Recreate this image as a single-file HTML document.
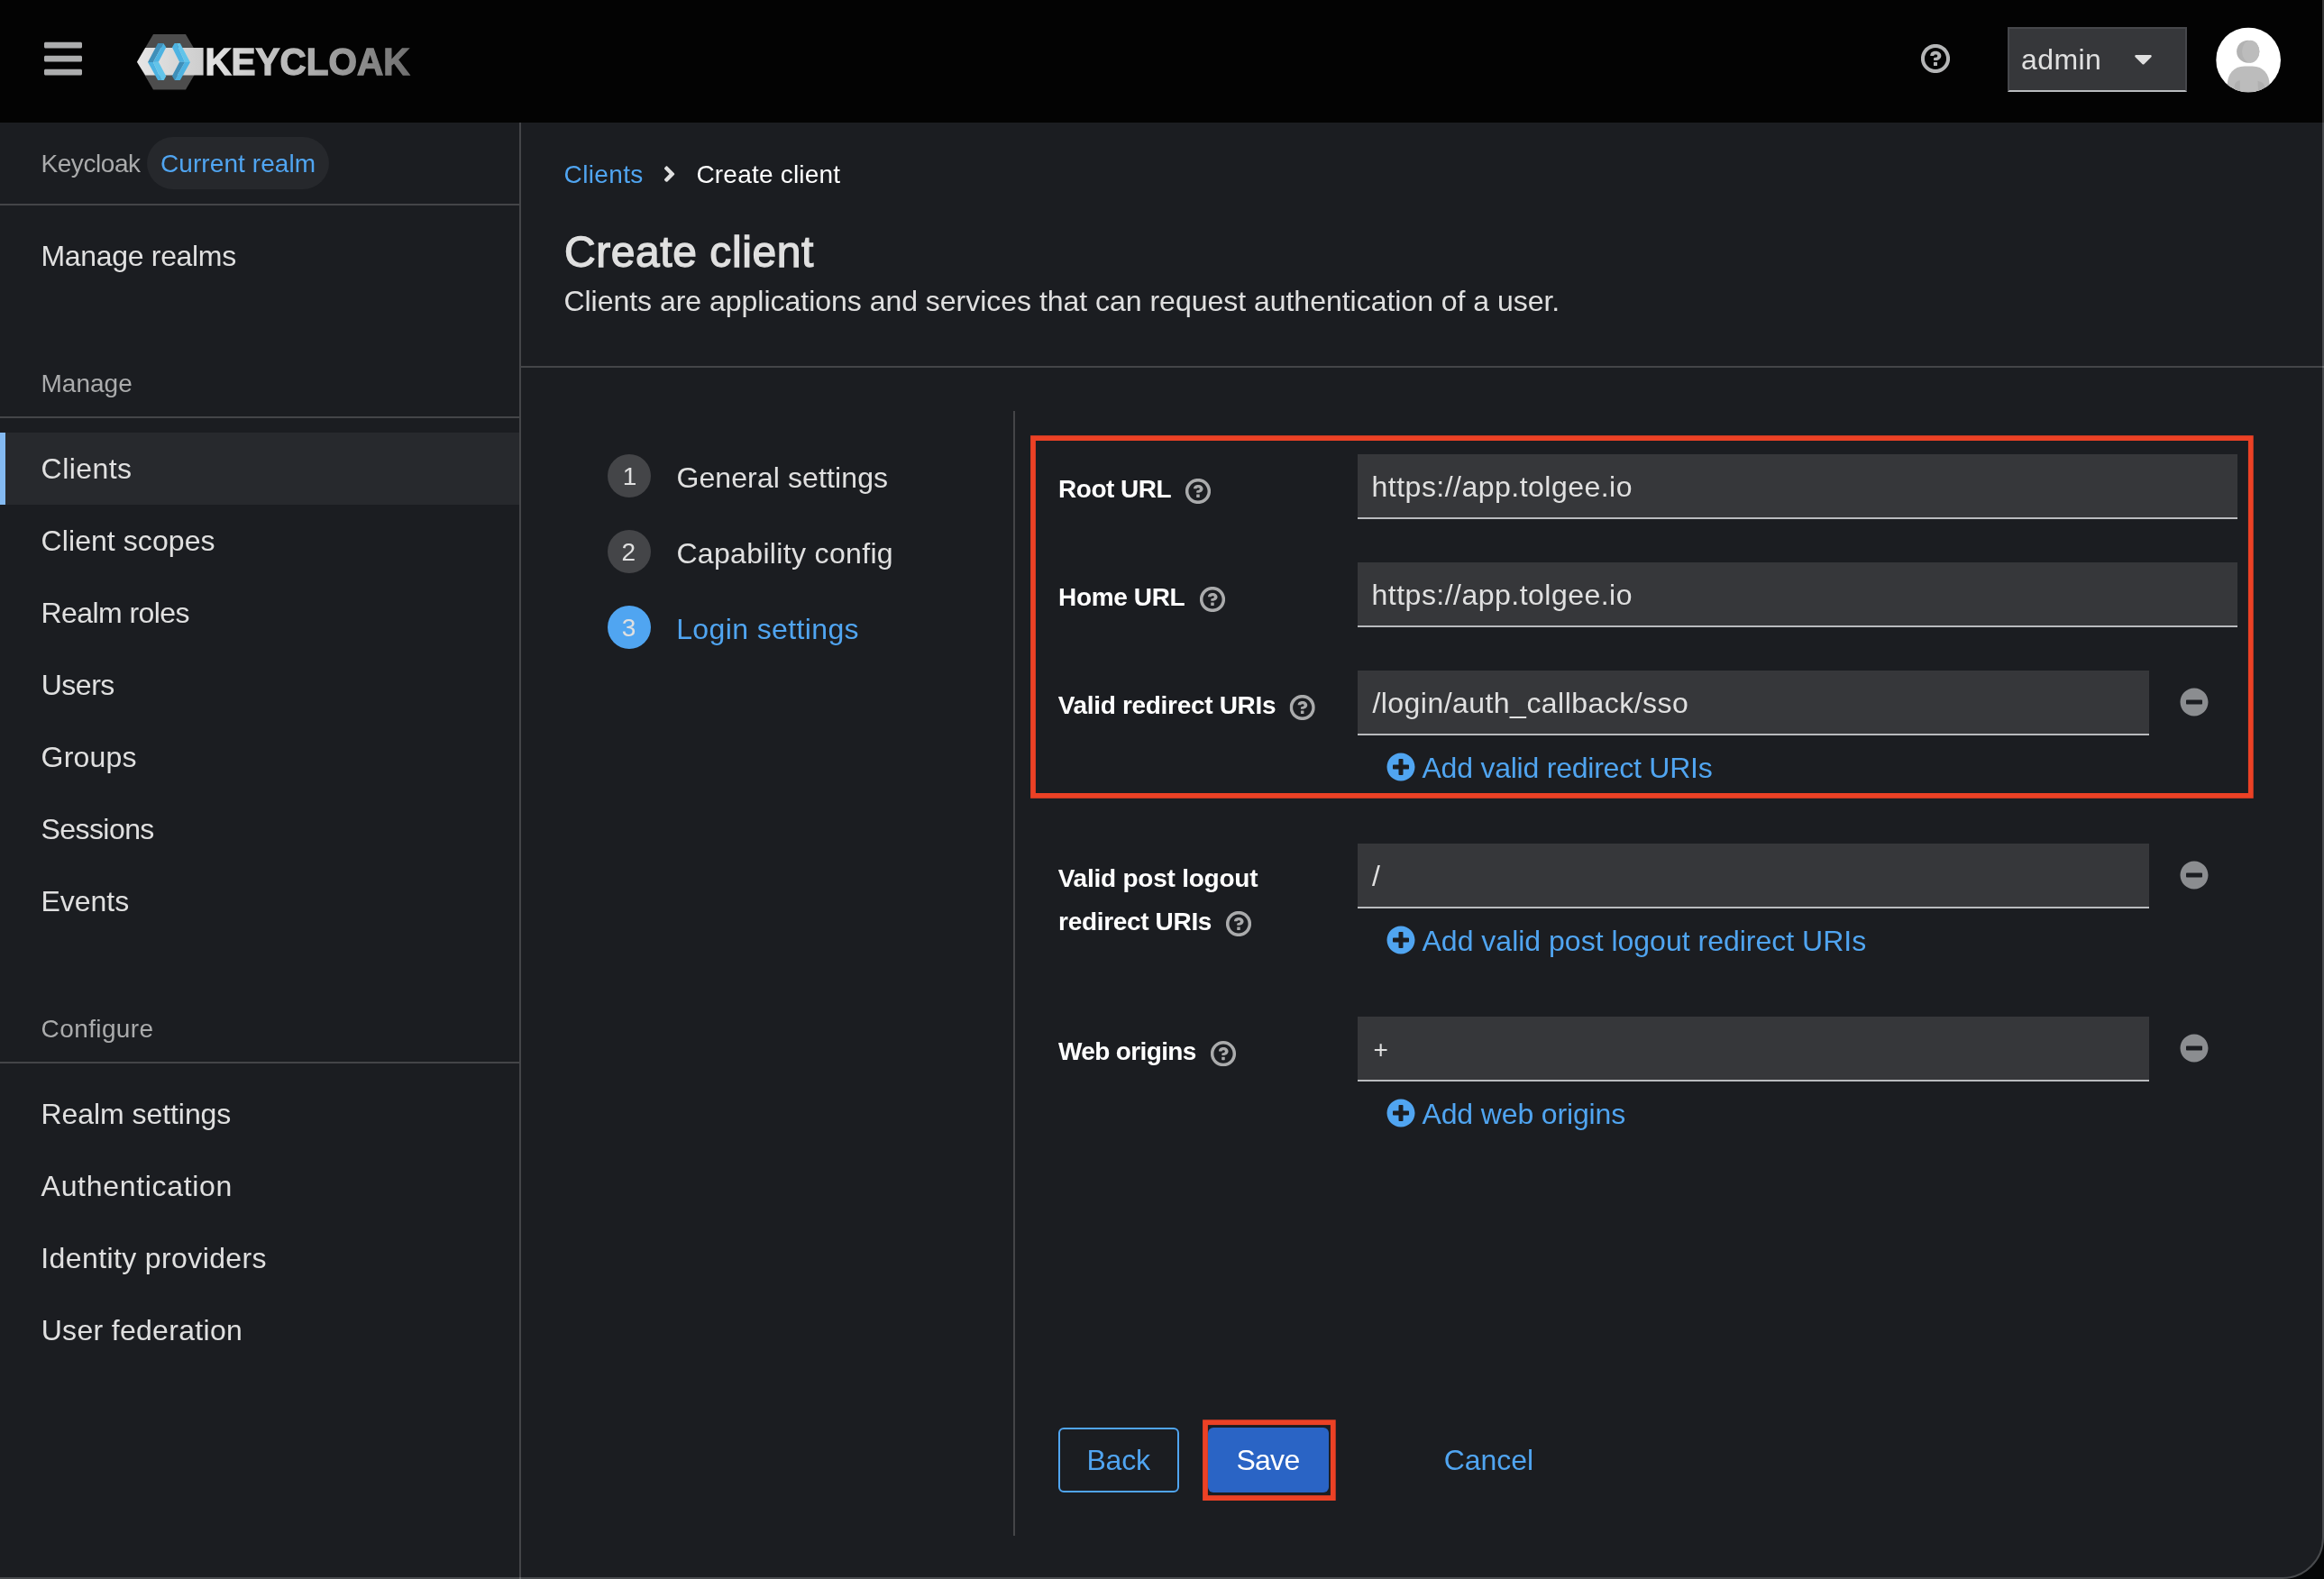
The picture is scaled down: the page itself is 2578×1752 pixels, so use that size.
<!DOCTYPE html>
<html lang="en">
<head>
<meta charset="utf-8">
<title>Create client - Keycloak Administration Console</title>
<style>
*{box-sizing:border-box;margin:0;padding:0}
html,body{width:2578px;height:1752px;overflow:hidden;background:#050607}
body{font-family:"Liberation Sans",sans-serif;position:relative;-webkit-font-smoothing:antialiased}
#win{position:absolute;left:0;top:0;width:2578px;height:1752px;background:#1b1d21;overflow:hidden;border-bottom-right-radius:46px}
#frame{position:absolute;left:-2px;top:-2px;width:2580px;height:1754px;border:2px solid rgba(255,255,255,.2);border-bottom-right-radius:46px;pointer-events:none;z-index:50}
.abs{position:absolute}
.t{position:absolute;display:block;white-space:nowrap;line-height:1;font-weight:400;font-style:normal;text-decoration:none;margin:0;padding:0}
header{position:absolute;left:0;top:0;width:2578px;height:136px;background:#030303}
#sidebar{position:absolute;left:0;top:136px;width:578px;height:1616px;border-right:2px solid #444548}
.hr{position:absolute;height:2px;background:#444548}
.vr{position:absolute;width:2px;background:#444548}
.pill{position:absolute;left:163px;top:152px;width:202px;height:58px;border-radius:29px;background:#26282c}
.cur{position:absolute;left:0;top:480px;width:576px;height:80px;background:#27292d}
.cur:before{content:"";position:absolute;left:0;top:0;width:6px;height:80px;background:#84baf2}
.step{position:absolute;left:674px;width:48px;height:48px;border-radius:50%;background:#444548}
.step.on{background:#50a5f1}
.in{position:absolute;left:1506px;height:72px;background:#36373a;border-bottom:2px solid #b9bbbe}
.btn{position:absolute;top:1584px;height:72px;border-radius:6px}
.ico{position:absolute;overflow:visible}
#txt nav,#txt main,#txt form,#txt div{display:block;position:static;margin:0;padding:0;border:0}
#txt .t{position:absolute}
</style>
</head>
<body>
<div id="win">
<header>
  <div class="abs" style="left:2227px;top:30px;width:199px;height:72px;background:#36373a;border:2px solid #46474b;border-bottom-color:#b9bbbe"></div>
</header>
<div id="sidebar"></div>
<div class="pill"></div>
<div class="hr" style="left:0;top:226px;width:576px"></div>
<div class="hr" style="left:0;top:462px;width:576px"></div>
<div class="cur"></div>
<div class="hr" style="left:0;top:1178px;width:576px"></div>
<div class="hr" style="left:578px;top:406px;width:2000px"></div>
<div class="vr" style="left:1124px;top:456px;height:1248px"></div>
<div class="step" style="top:504px"></div>
<div class="step" style="top:588px"></div>
<div class="step on" style="top:672px"></div>
<div class="in" style="top:504px;width:976px"></div>
<div class="in" style="top:624px;width:976px"></div>
<div class="in" style="top:744px;width:878px"></div>
<div class="in" style="top:936px;width:878px"></div>
<div class="in" style="top:1128px;width:878px"></div>
<div class="btn" style="left:1174px;width:134px;border:2px solid #50a5f1"></div>
<div class="btn" style="left:1340px;width:134px;background:#2a64c5"></div>
<svg class="ico" style="left:0;top:0;will-change:transform" width="2578" height="1752" viewBox="0 0 2578 1752">
<g fill="none" stroke="#ec4125" stroke-width="5.800">
<rect x="1146" y="486.100" width="1350.800" height="396.800"/>
<rect x="1337" y="1578.200" width="141.800" height="83.900"/>
</g>
<svg x="140" y="20" width="330" height="100" viewBox="140 20 330 100">
<defs>
<linearGradient id="lgT" x1="228" y1="0" x2="456" y2="0" gradientUnits="userSpaceOnUse"><stop offset="0" stop-color="#e4e4e4"/><stop offset=".45" stop-color="#b4b4b4"/><stop offset="1" stop-color="#6e6e6e"/></linearGradient>
<linearGradient id="lgB" x1="152" y1="0" x2="226" y2="0" gradientUnits="userSpaceOnUse"><stop offset="0" stop-color="#e6e6e6"/><stop offset="1" stop-color="#cdcdcd"/></linearGradient>
</defs>
<polygon points="170,38 206,38 224,68.700 206,99.500 170,99.500 152,68.700" fill="#4d4d4d"/>
<polygon points="152,68.700 161.200,53 225.600,53 225.600,83.500 161.200,83.500" fill="url(#lgB)"/>
<polygon points="175.14,48.03 181.31,48.03 169.95,69.03 164.02,69.03" fill="#3f8fb9"/>
<polygon points="181.31,48.03 184.28,52.48 175.88,68.78 169.95,69.03" fill="#4db3e2"/>
<polygon points="164.02,69.03 169.95,69.03 179.09,89.04 175.14,89.04" fill="#4db3e2"/>
<polygon points="169.95,69.03 175.88,68.78 184.28,84.59 181.81,89.04 179.09,89.04" fill="#62c4ea"/>
<polygon points="193.67,48.03 195.89,48.03 205.03,69.03 199.10,68.78 190.95,52.48" fill="#4db3e2"/>
<polygon points="195.89,48.03 199.84,48.03 210.96,69.03 205.03,69.03" fill="#62c4ea"/>
<polygon points="199.10,68.78 205.03,69.03 193.67,89.04 190.95,84.35" fill="#3f8fb9"/>
<polygon points="205.03,69.03 210.96,69.03 199.84,89.04 193.67,89.04" fill="#4db3e2"/>
<text x="227.400" y="83.200" font-family="'Liberation Sans',sans-serif" font-weight="700" font-size="43" textLength="227" lengthAdjust="spacingAndGlyphs" fill="url(#lgT)" stroke="url(#lgT)" stroke-width="1.400" stroke-linejoin="miter">KEYCLOAK</text>
</svg>
<svg x="49.00" y="41.05" width="42.00" height="48.00" viewBox="0 0 448 512"><path fill="#acadae" d="M16 132h416c8.837 0 16-7.163 16-16V76c0-8.837-7.163-16-16-16H16C7.163 60 0 67.163 0 76v40c0 8.837 7.163 16 16 16zm0 160h416c8.837 0 16-7.163 16-16v-40c0-8.837-7.163-16-16-16H16c-8.837 0-16 7.163-16 16v40c0 8.837 7.163 16 16 16zm0 160h416c8.837 0 16-7.163 16-16v-40c0-8.837-7.163-16-16-16H16c-8.837 0-16 7.163-16 16v40c0 8.837 7.163 16 16 16z"/></svg>
<svg x="2130.90" y="48.90" width="32.20" height="32.20" viewBox="0 0 1024 1024"><path fill="#b4b5b6" d="M521.3,576 C627.5,576 713.7,502 713.7,413.7 C713.7,325.4 627.6,253.6 521.3,253.6 C366,253.6 334.5,337.7 329.2,407.2 C329.2,414.3 335.2,416 343.5,416 L445,416 C450.5,416 458,415.5 460.8,406.5 C460.8,362.6 582.9,357.1 582.9,413.6 C582.9,441.9 556.2,470.9 521.3,473 C486.4,475.1 447.3,479.8 447.3,521.7 L447.3,553.8 C447.3,570.8 456.1,576 472,576 C487.9,576 521.3,576 521.3,576 M575.3,751.3 L575.3,655.3 C575.3,651.1 573.6,647 570.6,644 C567.6,640.9 563.6,639.2 559.3,639.3 L463.3,639.3 C459.1,639.3 455,641 452,644 C448.9,647 447.2,651 447.3,655.3 L447.3,751.3 C447.3,755.5 449,759.6 452,762.6 C455,765.7 459,767.4 463.3,767.3 L559.3,767.3 C563.5,767.3 567.6,765.6 570.6,762.6 C573.7,759.6 575.4,755.6 575.3,751.3 M512,896 C300.2,896 128,723.9 128,512 C128,300.3 300.2,128 512,128 C723.8,128 896,300.2 896,512 C896,723.8 723.7,896 512,896 M512.1,0 C229.7,0 0,229.8 0,512 C0,794.2 229.8,1024 512.1,1024 C794.4,1024 1024,794.3 1024,512 C1024,229.7 794.4,0 512.1,0"/></svg>
<svg x="2367.50" y="49.00" width="20.00" height="32.00" viewBox="0 0 320 512"><path fill="#e0e0e0" d="M31.3 192h257.3c17.8 0 26.7 21.5 14.1 34.1L174.1 354.8c-7.8 7.8-20.5 7.8-28.3 0L17.2 226.1C4.6 213.5 13.5 192 31.3 192z"/></svg>
<svg x="2458.200" y="30.600" width="71.800" height="71.800" viewBox="0 0 72 72">
<defs><clipPath id="avc"><circle cx="36" cy="36" r="36"/></clipPath></defs>
<circle cx="36" cy="36" r="36" fill="#ffffff"/>
<g clip-path="url(#avc)">
<circle cx="35.6" cy="26.7" r="12.6" fill="#b2b2b2"/>
<path d="M41.5 15.6a12.6 12.6 0 0 1 0 22.2 a6.7 6.7 0 0 1 -3.4 .9 a12.6 12.6 0 0 1 0 -24 a6.7 6.7 0 0 1 3.4 .9z" fill="#bcbcbc"/>
<ellipse cx="38.6" cy="26.7" rx="9.6" ry="12.6" fill="#bcbcbc"/>
<path d="M12.6 80V64c0-12 7-21 19-21h9c12 0 19 9 19 21v16z" fill="#bcbcbc"/>
<path d="M20.5 72V66c0-4 2.500-6.500 6.200-7.200V72z" fill="#b0b0b0"/>
<path d="M54 72V66c0-3.500-3-5.800-7.600-6.700L47 72z" fill="#b0b0b0"/>
</g></svg>
<svg x="735.60" y="179.10" width="14.00" height="28.00" viewBox="0 0 256 512"><path fill="#e0e0e0" d="M224.3 273l-136 136c-9.4 9.4-24.6 9.4-33.9 0l-22.6-22.6c-9.4-9.4-9.4-24.6 0-33.9l96.4-96.4-96.4-96.4c-9.4-9.4-9.4-24.6 0-33.9L54.3 103c9.4-9.4 24.6-9.4 33.9 0l136 136c9.5 9.4 9.5 24.6.1 34z"/></svg>
<svg x="1314.90" y="530.90" width="28.20" height="28.20" viewBox="0 0 1024 1024"><path fill="#aaabac" d="M521.3,576 C627.5,576 713.7,502 713.7,413.7 C713.7,325.4 627.6,253.6 521.3,253.6 C366,253.6 334.5,337.7 329.2,407.2 C329.2,414.3 335.2,416 343.5,416 L445,416 C450.5,416 458,415.5 460.8,406.5 C460.8,362.6 582.9,357.1 582.9,413.6 C582.9,441.9 556.2,470.9 521.3,473 C486.4,475.1 447.3,479.8 447.3,521.7 L447.3,553.8 C447.3,570.8 456.1,576 472,576 C487.9,576 521.3,576 521.3,576 M575.3,751.3 L575.3,655.3 C575.3,651.1 573.6,647 570.6,644 C567.6,640.9 563.6,639.2 559.3,639.3 L463.3,639.3 C459.1,639.3 455,641 452,644 C448.9,647 447.2,651 447.3,655.3 L447.3,751.3 C447.3,755.5 449,759.6 452,762.6 C455,765.7 459,767.4 463.3,767.3 L559.3,767.3 C563.5,767.3 567.6,765.6 570.6,762.6 C573.7,759.6 575.4,755.6 575.3,751.3 M512,896 C300.2,896 128,723.9 128,512 C128,300.3 300.2,128 512,128 C723.8,128 896,300.2 896,512 C896,723.8 723.7,896 512,896 M512.1,0 C229.7,0 0,229.8 0,512 C0,794.2 229.8,1024 512.1,1024 C794.4,1024 1024,794.3 1024,512 C1024,229.7 794.4,0 512.1,0"/></svg>
<svg x="1330.90" y="650.90" width="28.20" height="28.20" viewBox="0 0 1024 1024"><path fill="#aaabac" d="M521.3,576 C627.5,576 713.7,502 713.7,413.7 C713.7,325.4 627.6,253.6 521.3,253.6 C366,253.6 334.5,337.7 329.2,407.2 C329.2,414.3 335.2,416 343.5,416 L445,416 C450.5,416 458,415.5 460.8,406.5 C460.8,362.6 582.9,357.1 582.9,413.6 C582.9,441.9 556.2,470.9 521.3,473 C486.4,475.1 447.3,479.8 447.3,521.7 L447.3,553.8 C447.3,570.8 456.1,576 472,576 C487.9,576 521.3,576 521.3,576 M575.3,751.3 L575.3,655.3 C575.3,651.1 573.6,647 570.6,644 C567.6,640.9 563.6,639.2 559.3,639.3 L463.3,639.3 C459.1,639.3 455,641 452,644 C448.9,647 447.2,651 447.3,655.3 L447.3,751.3 C447.3,755.5 449,759.6 452,762.6 C455,765.7 459,767.4 463.3,767.3 L559.3,767.3 C563.5,767.3 567.6,765.6 570.6,762.6 C573.7,759.6 575.4,755.6 575.3,751.3 M512,896 C300.2,896 128,723.9 128,512 C128,300.3 300.2,128 512,128 C723.8,128 896,300.2 896,512 C896,723.8 723.7,896 512,896 M512.1,0 C229.7,0 0,229.8 0,512 C0,794.2 229.8,1024 512.1,1024 C794.4,1024 1024,794.3 1024,512 C1024,229.7 794.4,0 512.1,0"/></svg>
<svg x="1430.60" y="770.90" width="28.20" height="28.20" viewBox="0 0 1024 1024"><path fill="#aaabac" d="M521.3,576 C627.5,576 713.7,502 713.7,413.7 C713.7,325.4 627.6,253.6 521.3,253.6 C366,253.6 334.5,337.7 329.2,407.2 C329.2,414.3 335.2,416 343.5,416 L445,416 C450.5,416 458,415.5 460.8,406.5 C460.8,362.6 582.9,357.1 582.9,413.6 C582.9,441.9 556.2,470.9 521.3,473 C486.4,475.1 447.3,479.8 447.3,521.7 L447.3,553.8 C447.3,570.8 456.1,576 472,576 C487.9,576 521.3,576 521.3,576 M575.3,751.3 L575.3,655.3 C575.3,651.1 573.6,647 570.6,644 C567.6,640.9 563.6,639.2 559.3,639.3 L463.3,639.3 C459.1,639.3 455,641 452,644 C448.9,647 447.2,651 447.3,655.3 L447.3,751.3 C447.3,755.5 449,759.6 452,762.6 C455,765.7 459,767.4 463.3,767.3 L559.3,767.3 C563.5,767.3 567.6,765.6 570.6,762.6 C573.7,759.6 575.4,755.6 575.3,751.3 M512,896 C300.2,896 128,723.9 128,512 C128,300.3 300.2,128 512,128 C723.8,128 896,300.2 896,512 C896,723.8 723.7,896 512,896 M512.1,0 C229.7,0 0,229.8 0,512 C0,794.2 229.8,1024 512.1,1024 C794.4,1024 1024,794.3 1024,512 C1024,229.7 794.4,0 512.1,0"/></svg>
<svg x="1359.90" y="1010.90" width="28.20" height="28.20" viewBox="0 0 1024 1024"><path fill="#aaabac" d="M521.3,576 C627.5,576 713.7,502 713.7,413.7 C713.7,325.4 627.6,253.6 521.3,253.6 C366,253.6 334.5,337.7 329.2,407.2 C329.2,414.3 335.2,416 343.5,416 L445,416 C450.5,416 458,415.5 460.8,406.5 C460.8,362.6 582.9,357.1 582.9,413.6 C582.9,441.9 556.2,470.9 521.3,473 C486.4,475.1 447.3,479.8 447.3,521.7 L447.3,553.8 C447.3,570.8 456.1,576 472,576 C487.9,576 521.3,576 521.3,576 M575.3,751.3 L575.3,655.3 C575.3,651.1 573.6,647 570.6,644 C567.6,640.9 563.6,639.2 559.3,639.3 L463.3,639.3 C459.1,639.3 455,641 452,644 C448.9,647 447.2,651 447.3,655.3 L447.3,751.3 C447.3,755.5 449,759.6 452,762.6 C455,765.7 459,767.4 463.3,767.3 L559.3,767.3 C563.5,767.3 567.6,765.6 570.6,762.6 C573.7,759.6 575.4,755.6 575.3,751.3 M512,896 C300.2,896 128,723.9 128,512 C128,300.3 300.2,128 512,128 C723.8,128 896,300.2 896,512 C896,723.8 723.7,896 512,896 M512.1,0 C229.7,0 0,229.8 0,512 C0,794.2 229.8,1024 512.1,1024 C794.4,1024 1024,794.3 1024,512 C1024,229.7 794.4,0 512.1,0"/></svg>
<svg x="1342.90" y="1155.10" width="28.20" height="28.20" viewBox="0 0 1024 1024"><path fill="#aaabac" d="M521.3,576 C627.5,576 713.7,502 713.7,413.7 C713.7,325.4 627.6,253.6 521.3,253.6 C366,253.6 334.5,337.7 329.2,407.2 C329.2,414.3 335.2,416 343.5,416 L445,416 C450.5,416 458,415.5 460.8,406.5 C460.8,362.6 582.9,357.1 582.9,413.6 C582.9,441.9 556.2,470.9 521.3,473 C486.4,475.1 447.3,479.8 447.3,521.7 L447.3,553.8 C447.3,570.8 456.1,576 472,576 C487.9,576 521.3,576 521.3,576 M575.3,751.3 L575.3,655.3 C575.3,651.1 573.6,647 570.6,644 C567.6,640.9 563.6,639.2 559.3,639.3 L463.3,639.3 C459.1,639.3 455,641 452,644 C448.9,647 447.2,651 447.3,655.3 L447.3,751.3 C447.3,755.5 449,759.6 452,762.6 C455,765.7 459,767.4 463.3,767.3 L559.3,767.3 C563.5,767.3 567.6,765.6 570.6,762.6 C573.7,759.6 575.4,755.6 575.3,751.3 M512,896 C300.2,896 128,723.9 128,512 C128,300.3 300.2,128 512,128 C723.8,128 896,300.2 896,512 C896,723.8 723.7,896 512,896 M512.1,0 C229.7,0 0,229.8 0,512 C0,794.2 229.8,1024 512.1,1024 C794.4,1024 1024,794.3 1024,512 C1024,229.7 794.4,0 512.1,0"/></svg>
<svg x="2418.00" y="763.00" width="32.00" height="32.00" viewBox="0 0 512 512"><path fill="#8b8d90" d="M256 8C119 8 8 119 8 256s111 248 248 248 248-111 248-248S393 8 256 8zM124 296c-6.6 0-12-5.4-12-12v-56c0-6.6 5.4-12 12-12h264c6.6 0 12 5.4 12 12v56c0 6.6-5.4 12-12 12H124z"/></svg>
<svg x="2418.00" y="955.00" width="32.00" height="32.00" viewBox="0 0 512 512"><path fill="#8b8d90" d="M256 8C119 8 8 119 8 256s111 248 248 248 248-111 248-248S393 8 256 8zM124 296c-6.6 0-12-5.4-12-12v-56c0-6.6 5.4-12 12-12h264c6.6 0 12 5.4 12 12v56c0 6.6-5.4 12-12 12H124z"/></svg>
<svg x="2418.00" y="1147.00" width="32.00" height="32.00" viewBox="0 0 512 512"><path fill="#8b8d90" d="M256 8C119 8 8 119 8 256s111 248 248 248 248-111 248-248S393 8 256 8zM124 296c-6.6 0-12-5.4-12-12v-56c0-6.6 5.4-12 12-12h264c6.6 0 12 5.4 12 12v56c0 6.6-5.4 12-12 12H124z"/></svg>
<svg x="1538.00" y="835.00" width="32.00" height="32.00" viewBox="0 0 512 512"><path fill="#50a5f1" d="M256 8C119 8 8 119 8 256s111 248 248 248 248-111 248-248S393 8 256 8zm144 276c0 6.6-5.4 12-12 12h-92v92c0 6.6-5.4 12-12 12h-56c-6.6 0-12-5.4-12-12v-92h-92c-6.6 0-12-5.4-12-12v-56c0-6.6 5.4-12 12-12h92v-92c0-6.6 5.4-12 12-12h56c6.6 0 12 5.4 12 12v92h92c6.6 0 12 5.4 12 12v56z"/></svg>
<svg x="1538.00" y="1027.00" width="32.00" height="32.00" viewBox="0 0 512 512"><path fill="#50a5f1" d="M256 8C119 8 8 119 8 256s111 248 248 248 248-111 248-248S393 8 256 8zm144 276c0 6.6-5.4 12-12 12h-92v92c0 6.6-5.4 12-12 12h-56c-6.6 0-12-5.4-12-12v-92h-92c-6.6 0-12-5.4-12-12v-56c0-6.6 5.4-12 12-12h92v-92c0-6.6 5.4-12 12-12h56c6.6 0 12 5.4 12 12v92h92c6.6 0 12 5.4 12 12v56z"/></svg>
<svg x="1538.00" y="1219.00" width="32.00" height="32.00" viewBox="0 0 512 512"><path fill="#50a5f1" d="M256 8C119 8 8 119 8 256s111 248 248 248 248-111 248-248S393 8 256 8zm144 276c0 6.6-5.4 12-12 12h-92v92c0 6.6-5.4 12-12 12h-56c-6.6 0-12-5.4-12-12v-92h-92c-6.6 0-12-5.4-12-12v-56c0-6.6 5.4-12 12-12h92v-92c0-6.6 5.4-12 12-12h56c6.6 0 12 5.4 12 12v92h92c6.6 0 12 5.4 12 12v56z"/></svg>
</svg>
<div id="txt" style="position:absolute;left:0;top:0;width:2578px;height:1752px;will-change:transform">
<div>
<span class="t" style="left:2242.0px;top:50px;font-size:32px;color:#e0e0e0;letter-spacing:0.44px;">admin</span>
</div>
<nav>
<a class="t" href="#" style="left:45.5px;top:168px;font-size:28px;color:#aaabac;letter-spacing:-0.44px;">Keycloak</a>
<a class="t" href="#" style="left:178.0px;top:168px;font-size:28px;color:#50a5f1;letter-spacing:0.08px;">Current realm</a>
<a class="t" href="#" style="left:45.5px;top:268px;font-size:32px;color:#e0e0e0;letter-spacing:-0.32px;">Manage realms</a>
<a class="t" href="#" style="left:45.5px;top:412px;font-size:28px;color:#aaabac;letter-spacing:0.02px;">Manage</a>
<a class="t" href="#" style="left:45.6px;top:504px;font-size:32px;color:#e0e0e0;letter-spacing:0.44px;">Clients</a>
<a class="t" href="#" style="left:45.6px;top:584px;font-size:32px;color:#e0e0e0;letter-spacing:0.07px;">Client scopes</a>
<a class="t" href="#" style="left:45.5px;top:664px;font-size:32px;color:#e0e0e0;letter-spacing:-0.57px;">Realm roles</a>
<a class="t" href="#" style="left:45.7px;top:744px;font-size:32px;color:#e0e0e0;letter-spacing:-0.48px;">Users</a>
<a class="t" href="#" style="left:45.6px;top:824px;font-size:32px;color:#e0e0e0;letter-spacing:0.18px;">Groups</a>
<a class="t" href="#" style="left:45.5px;top:904px;font-size:32px;color:#e0e0e0;letter-spacing:-0.57px;">Sessions</a>
<a class="t" href="#" style="left:45.5px;top:984px;font-size:32px;color:#e0e0e0;letter-spacing:-0.02px;">Events</a>
<a class="t" href="#" style="left:45.6px;top:1128px;font-size:28px;color:#aaabac;letter-spacing:0.39px;">Configure</a>
<a class="t" href="#" style="left:45.5px;top:1220px;font-size:32px;color:#e0e0e0;letter-spacing:-0.06px;">Realm settings</a>
<a class="t" href="#" style="left:45.6px;top:1300px;font-size:32px;color:#e0e0e0;letter-spacing:0.69px;">Authentication</a>
<a class="t" href="#" style="left:45.3px;top:1380px;font-size:32px;color:#e0e0e0;letter-spacing:0.39px;">Identity providers</a>
<a class="t" href="#" style="left:45.7px;top:1460px;font-size:32px;color:#e0e0e0;letter-spacing:0.31px;">User federation</a>
</nav>
<main>
<a class="t" href="#" style="left:625.6px;top:180px;font-size:28px;color:#50a5f1;letter-spacing:0.35px;">Clients</a>
<span class="t" style="left:772.4px;top:180px;font-size:28px;color:#ffffff;letter-spacing:0.21px;">Create client</span>
<h1 class="t" style="left:625.9px;top:256px;font-size:48px;color:#e0e0e0;letter-spacing:0.58px;-webkit-text-stroke:1.3px #e0e0e0;">Create client</h1>
<p class="t" style="left:625.4px;top:318px;font-size:32px;color:#e0e0e0;letter-spacing:-0.02px;">Clients are applications and services that can request authentication of a user.</p>
<span class="t" style="left:750.4px;top:514px;font-size:32px;color:#e0e0e0;letter-spacing:0.11px;">General settings</span>
<span class="t" style="left:750.4px;top:598px;font-size:32px;color:#e0e0e0;letter-spacing:0.34px;">Capability config</span>
<span class="t" style="left:750.2px;top:682px;font-size:32px;color:#50a5f1;letter-spacing:0.38px;">Login settings</span>
<span class="t" style="left:690.8px;top:515px;font-size:28px;color:#e0e0e0;">1</span>
<span class="t" style="left:689.6px;top:599px;font-size:28px;color:#e0e0e0;">2</span>
<span class="t" style="left:689.8px;top:683px;font-size:28px;color:#e0e0e0;">3</span>
</main>
<form>
<label class="t" style="left:1174.1px;top:529px;font-size:28px;color:#ffffff;font-weight:700;letter-spacing:-0.52px;">Root URL</label>
<label class="t" style="left:1174.1px;top:649px;font-size:28px;color:#ffffff;font-weight:700;letter-spacing:-0.36px;">Home URL</label>
<label class="t" style="left:1173.7px;top:769px;font-size:28px;color:#ffffff;font-weight:700;letter-spacing:-0.31px;">Valid redirect URIs</label>
<label class="t" style="left:1173.7px;top:961px;font-size:28px;color:#ffffff;font-weight:700;letter-spacing:-0.23px;">Valid post logout</label>
<label class="t" style="left:1174.1px;top:1009px;font-size:28px;color:#ffffff;font-weight:700;letter-spacing:-0.33px;">redirect URIs</label>
<label class="t" style="left:1173.9px;top:1153px;font-size:28px;color:#ffffff;font-weight:700;letter-spacing:-0.62px;">Web origins</label>
<span class="t" style="left:1521.6px;top:524px;font-size:32px;color:#e0e0e0;letter-spacing:0.48px;">https://app.tolgee.io</span>
<span class="t" style="left:1521.6px;top:644px;font-size:32px;color:#e0e0e0;letter-spacing:0.48px;">https://app.tolgee.io</span>
<span class="t" style="left:1522.4px;top:764px;font-size:32px;color:#e0e0e0;letter-spacing:0.46px;">/login/auth_callback/sso</span>
<span class="t" style="left:1522.1px;top:956px;font-size:32px;color:#e0e0e0;">/</span>
<span class="t" style="left:1523.6px;top:1151px;font-size:28px;color:#e0e0e0;">+</span>
<a class="t" href="#" style="left:1577.5px;top:836px;font-size:32px;color:#50a5f1;letter-spacing:-0.23px;">Add valid redirect URIs</a>
<a class="t" href="#" style="left:1577.5px;top:1028px;font-size:32px;color:#50a5f1;">Add valid post logout redirect URIs</a>
<a class="t" href="#" style="left:1577.5px;top:1220px;font-size:32px;color:#50a5f1;letter-spacing:-0.14px;">Add web origins</a>
<span class="t" style="left:1205.4px;top:1604px;font-size:32px;color:#50a5f1;letter-spacing:-0.14px;">Back</span>
<span class="t" style="left:1371.4px;top:1604px;font-size:32px;color:#ffffff;letter-spacing:-0.71px;">Save</span>
<span class="t" style="left:1601.7px;top:1604px;font-size:32px;color:#50a5f1;letter-spacing:-0.02px;">Cancel</span>
</form>
</div>
</div>
<div id="frame"></div>
</body>
</html>
